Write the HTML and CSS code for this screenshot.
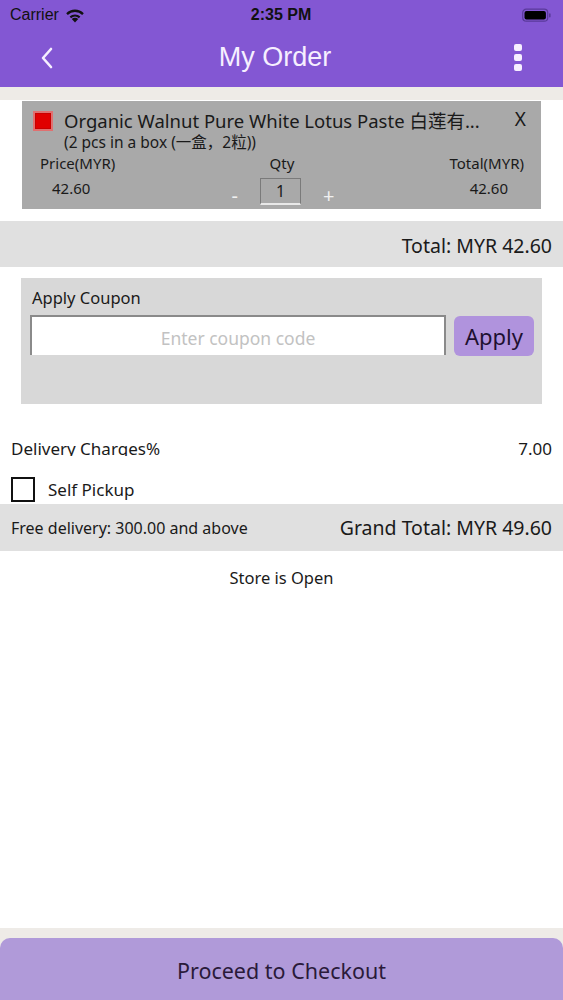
FILE: index.html
```html
<!DOCTYPE html>
<html>
<head>
<meta charset="utf-8">
<link rel="stylesheet" href="styles.css">
</head>
<body>
<div class="screen">
  <header class="topbar">
    <div class="status">
      <div class="status-left">Carrier
        <svg class="wifi" width="20" height="15" viewBox="0 0 20 15"><path d="M10 14.5 L6.8 11 A4.6 4.6 0 0 1 13.2 11 Z" fill="#111"/><path d="M4.6 8.6 A7.8 7.8 0 0 1 15.4 8.6 L13.9 10.2 A5.6 5.6 0 0 0 6.1 10.2 Z" fill="#111"/><path d="M1.2 5.2 A12.5 12.5 0 0 1 18.8 5.2 L17.2 6.9 A10.2 10.2 0 0 0 2.8 6.9 Z" fill="#111"/></svg>
      </div>
      <div class="status-time">2:35 PM</div>
      <div class="status-right">
        <svg width="30" height="15" viewBox="0 0 30 15"><rect x="0.7" y="1.2" width="25" height="12" rx="3.5" fill="none" stroke="#5a3a9a" stroke-width="1.2"/><rect x="2.5" y="3" width="21.4" height="8.4" rx="2" fill="#000"/><rect x="27" y="5.2" width="1.6" height="4.4" rx="0.8" fill="#5a3a9a"/></svg>
      </div>
    </div>
    <div class="navbar">
      <svg class="back" width="14" height="24" viewBox="0 0 14 24"><path d="M11 3 L3 12 L11 21" fill="none" stroke="#f6efff" stroke-width="2.6" stroke-linecap="round" stroke-linejoin="round"/></svg>
      <div class="title">My Order</div>
      <div class="kebab"><span></span><span></span><span></span></div>
    </div>
  </header>
  <div class="strip"></div>

  <main class="content">
    <section class="item">
      <div class="item-head">
        <span class="redbox"></span>
        <div class="item-name">Organic Walnut Pure White Lotus Paste 白莲有...</div>
        <span class="remove">X</span>
      </div>
      <div class="item-sub">(2 pcs in a box (一盒，2粒))</div>
      <div class="item-grid">
        <div class="lbl l">Price(MYR)</div>
        <div class="lbl c">Qty</div>
        <div class="lbl r">Total(MYR)</div>
        <div class="val l">42.60</div>
        <div class="qty"><span class="pm">-</span><span class="qbox">1</span><span class="pm">+</span></div>
        <div class="val r">42.60</div>
      </div>
    </section>

    <div class="bar total-bar"><span class="big">Total: MYR 42.60</span></div>

    <section class="coupon">
      <div class="coupon-title">Apply Coupon</div>
      <div class="coupon-row">
        <div class="coupon-input">Enter coupon code</div>
        <div class="apply">Apply</div>
      </div>
    </section>

    <div class="delivery"><span>Delivery Charges%</span><span>7.00</span></div>
    <div class="pickup"><span class="cbox"></span><span>Self Pickup</span></div>
    <div class="bar grand-bar"><span class="small">Free delivery: 300.00 and above</span><span class="big">Grand Total: MYR 49.60</span></div>
    <div class="store">Store is Open</div>
  </main>

  <footer class="footer">
    <div class="checkout">Proceed to Checkout</div>
  </footer>
</div>
</body>
</html>
```
FILE: styles.css
```css
* { box-sizing: border-box; }
html, body { margin: 0; padding: 0; }
body {
  width: 563px;
  height: 1000px;
  overflow: hidden;
  background: #fff;
  font-family: "Noto Sans", "Noto Sans CJK SC", sans-serif;
  color: #1a1a1a;
}
.screen { display: flex; flex-direction: column; height: 1000px; }
.topbar { background: #8357d3; height: 87px; display: flex; flex-direction: column; }
.status { height: 30px; display: flex; align-items: center; justify-content: space-between; padding: 0 11px 0 10px; font-family: "Liberation Sans", sans-serif; font-size: 16px; color: #111; }
.status-left { display: flex; align-items: center; gap: 6px; width: 120px; }
.status-time { font-weight: bold; font-size: 16px; }
.status-right { width: 120px; display: flex; justify-content: flex-end; }
.navbar { flex: 1; display: flex; align-items: center; justify-content: space-between; padding: 0 41px 0 40px; }
.back { display: block; margin-top: -2px; }
.title { color: #f6efff; font-family: "Liberation Sans", sans-serif; font-size: 27px; margin-top: -2px; margin-right: 18px; }
.kebab { display: flex; flex-direction: column; gap: 3px; margin-top: -2px; }
.kebab span { width: 8px; height: 7px; background: #f6efff; border-radius: 2px; }
.strip { height: 13px; background: #eeebe7; }

.content { flex: 1; display: flex; flex-direction: column; }
.item { margin: 1px 22px 0 22px; background: #a9a9a9; height: 108px; padding: 7px 10px 0 11px; }
.item-head { display: flex; align-items: center; height: 26px; }
.redbox { width: 20px; height: 20px; border: 2px solid #e07070; background: #e00000; box-shadow: inset 0 0 0 1px #c80000; flex: none; }
.item-name { font-size: 18.5px; margin-left: 11px; flex: 1; white-space: nowrap; line-height: 26px; }
.remove { font-size: 19px; margin-right: 5px; line-height: 26px; margin-top: -4px; }
.item-sub { font-size: 15.5px; margin: -2px 0 0 31px; line-height: 20px; }
.item-grid { display: grid; grid-template-columns: 1fr 1fr 1fr; margin-top: 0; font-size: 15px; }
.lbl { line-height: 22px; }
.l { text-align: left; padding-left: 7px; }
.c { text-align: center; padding-left: 0; }
.r { text-align: right; padding-right: 7px; }
.val { line-height: 22px; margin-top: 3px; }
.val.l { padding-left: 19px; }
.val.r { padding-right: 23px; }
.qty { display: flex; justify-content: center; align-items: center; gap: 22px; padding-left: 2px; margin-top: 2px; }
.pm { color: #f0f0f0; font-size: 20px; line-height: 20px; margin-top: 10px; }
.qbox { width: 41px; height: 27px; border: 1px solid #7a7a7a; border-bottom: 2px solid #e8e8e8; display: flex; align-items: center; justify-content: center; font-size: 16px; }

.bar { background: #e0e0e0; display: flex; align-items: center; padding: 0 11px; }
.total-bar { margin-top: 12px; height: 46px; justify-content: flex-end; padding-top: 2px; }
.big { font-size: 19.5px; }
.coupon { margin: 11px 21px 0 21px; height: 126px; background: #d8d8d8; padding: 7px 8px 0 9px; }
.coupon-title { font-size: 16.5px; line-height: 26px; margin-left: 2px; }
.coupon-row { display: flex; gap: 8px; margin-top: 4px; }
.coupon-input { width: 416px; height: 40px; background: #fff; border: 2px solid #8a8a8a; border-bottom: none; display: flex; align-items: center; justify-content: center; color: #c2c2c2; font-size: 17.5px; padding-top: 4px; }
.apply { width: 80px; height: 40px; background: #b093dd; border-radius: 6px; display: flex; align-items: center; justify-content: center; font-size: 22px; color: #1e1030; margin-top: 1px; }
.delivery { margin-top: 32px; padding: 0 11px; display: flex; justify-content: space-between; font-size: 17px; height: 20px; overflow: hidden; line-height: 26px; }
.pickup { display: flex; align-items: center; gap: 13px; padding-left: 11px; margin-top: 21px; font-size: 17px; }
.cbox { width: 24px; height: 25px; border: 2px solid #111; }
.grand-bar { margin-top: 2px; height: 47px; justify-content: space-between; }
.small { font-size: 16px; }
.store { text-align: center; font-size: 16.5px; margin-top: 15px; }
.footer { background: #eeebe7; padding-top: 10px; height: 72px; }
.checkout { height: 62px; background: #b09ad9; border-radius: 10px 10px 0 0; display: flex; align-items: center; justify-content: center; font-size: 21.5px; color: #2a1a3a; padding-top: 2px; }
```
